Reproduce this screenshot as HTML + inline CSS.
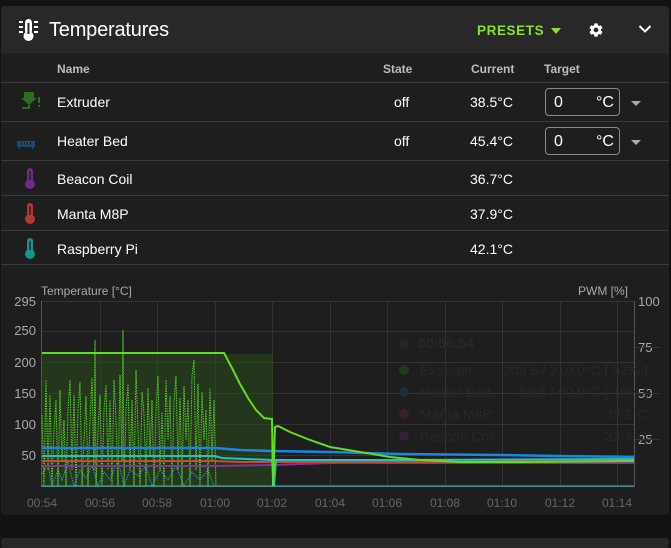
<!DOCTYPE html>
<html><head><meta charset="utf-8"><style>
*{box-sizing:border-box;margin:0;padding:0}
body{width:671px;height:543px;background:#121212;font-family:"Liberation Sans",sans-serif;color:#fff;overflow:hidden;position:relative}
.card{position:absolute;left:1px;top:6px;width:668px;height:509px;background:#1e1e1e;border-radius:3px;overflow:hidden}
.hdr{height:47px;background:#282828;position:relative}
.hdr .t{position:absolute;left:48px;top:13px;font-size:20px;letter-spacing:-0.2px}
.presets{position:absolute;left:476px;top:17px;color:#8be12c;font-weight:bold;font-size:13.5px;letter-spacing:0.6px}
.row{position:absolute;left:0;width:668px;border-top:1px solid #3a3a3a;font-size:14px}
.th{font-size:12px;font-weight:bold;color:#bdbdbd;position:absolute}
.c{position:absolute}
.inp{position:absolute;left:544px;width:75px;height:28px;border:1px solid #8a8a8a;border-radius:4px;font-size:16px}
.inp span{position:absolute;top:5px}
.tri{position:absolute;left:630px;width:0;height:0;border-left:5px solid transparent;border-right:5px solid transparent;border-top:5px solid #aaa}
.bot{position:absolute;left:1px;top:538px;width:668px;height:10px;background:#282828;border-radius:3px}
</style></head><body>
<div class="card">
 <div class="hdr">
  <svg style="position:absolute;left:17px;top:12px" width="22" height="24" viewBox="0 0 22 24">
   <rect x="7" y="1" width="7" height="15" rx="3.5" fill="#fff"/><circle cx="10.5" cy="18" r="5" fill="#fff"/>
   <rect x="9.5" y="5" width="2" height="11" fill="#282828"/>
   <g fill="#fff"><rect x="1" y="3" width="4" height="2"/><rect x="1" y="8" width="4" height="2"/><rect x="1" y="13" width="4" height="2"/><rect x="16" y="3" width="4" height="2"/><rect x="16" y="8" width="4" height="2"/><rect x="16" y="13" width="4" height="2"/></g>
  </svg>
  <div class="t">Temperatures</div>
  <div class="presets">PRESETS</div>
  <div style="position:absolute;left:550px;top:22px;border-left:5px solid transparent;border-right:5px solid transparent;border-top:6px solid #8be12c"></div>
  <svg style="position:absolute;left:587px;top:16px" width="16" height="16" viewBox="0 0 24 24"><path fill="#fff" d="M12 15.5A3.5 3.5 0 1 1 12 8.5a3.5 3.5 0 0 1 0 7zm7.43-2.530c.04-.32.07-.64.07-.97s-.03-.66-.07-1l2.110-1.630c.19-.15.24-.42.12-.64l-2-3.460c-.12-.22-.39-.31-.61-.22l-2.490 1c-.52-.39-1.060-.73-1.690-.98l-.37-2.650A.506.506 0 0 0 14 2h-4c-.25 0-.46.18-.5.42l-.37 2.650c-.63.25-1.170.59-1.690.98l-2.490-1c-.22-.09-.49 0-.61.22l-2 3.460c-.13.22-.07.49.12.64L4.570 11c-.04.34-.07.67-.07 1s.03.65.07.97l-2.110 1.660c-.19.15-.25.42-.12.64l2 3.460c.12.22.39.3.61.22l2.490-1.010c.52.4 1.060.74 1.690.99l.37 2.650c.04.24.25.42.5.42h4c.25 0 .46-.18.5-.42l.37-2.650c.63-.26 1.170-.59 1.690-.99l2.490 1.010c.22.08.49 0 .61-.22l2-3.460c.12-.22.07-.49-.12-.64l-2.110-1.660z"/></svg>
  <svg style="position:absolute;left:637px;top:18px" width="14" height="10" viewBox="0 0 14 10"><path d="M1.5 2l5.5 5.5L12.5 2" stroke="#fff" stroke-width="2" fill="none"/></svg>
 </div>
 <div class="th" style="left:56px;top:56px">Name</div>
 <div class="th" style="left:382px;top:56px">State</div>
 <div class="th" style="left:470px;top:56px">Current</div>
 <div class="th" style="left:543px;top:56px">Target</div>

 <div class="row" style="top:76px;height:39px">
  <svg class="c" style="left:18px;top:8px" width="22" height="22" viewBox="0 0 22 22"><path fill="#2c6e1e" d="M5 1h10v6h3l-8 7-8-7h3z"/><path d="M10 14v3H3" stroke="#2c6e1e" stroke-width="2" fill="none"/><rect x="19" y="6" width="2" height="6" fill="#2c6e1e"/><rect x="19" y="14" width="2" height="2" fill="#2c6e1e"/></svg>
  <div class="c" style="left:56px;top:11px">Extruder</div>
  <div class="c" style="left:393px;top:11px">off</div>
  <div class="c" style="left:469px;top:11px">38.5°C</div>
  <div class="inp" style="top:5px"><span style="left:8px">0</span><span style="left:50px">°C</span></div>
  <div class="tri" style="top:18px"></div>
 </div>
 <div class="row" style="top:115px;height:39px">
  <svg class="c" style="left:16px;top:17px" width="18" height="10" viewBox="0 0 18 10"><path fill="#1d4a72" d="M0 2h18v6h-2v2h-1V8H3v2H2V8H0z"/><g fill="#1e1e1e"><rect x="4" y="3" width="1" height="3"/><rect x="7" y="3" width="1" height="3"/><rect x="10" y="3" width="1" height="3"/><rect x="13" y="3" width="1" height="3"/></g></svg>
  <div class="c" style="left:56px;top:11px">Heater Bed</div>
  <div class="c" style="left:393px;top:11px">off</div>
  <div class="c" style="left:469px;top:11px">45.4°C</div>
  <div class="inp" style="top:5px"><span style="left:8px">0</span><span style="left:50px">°C</span></div>
  <div class="tri" style="top:18px"></div>
 </div>
 <div class="row" style="top:154px;height:35px">
  <svg class="c" style="left:23px;top:7px" width="12" height="22" viewBox="0 0 12 22"><rect x="3" y="0" width="6" height="14" rx="3" fill="#6b2d85"/><circle cx="6" cy="16" r="5" fill="#6b2d85"/><rect x="5.3" y="3" width="1.4" height="9" fill="#1e1e1e"/></svg>
  <div class="c" style="left:56px;top:10px">Beacon Coil</div>
  <div class="c" style="left:469px;top:10px">36.7°C</div>
 </div>
 <div class="row" style="top:189px;height:35px">
  <svg class="c" style="left:23px;top:7px" width="12" height="22" viewBox="0 0 12 22"><rect x="3" y="0" width="6" height="14" rx="3" fill="#b3382f"/><circle cx="6" cy="16" r="5" fill="#b3382f"/><rect x="5.3" y="3" width="1.4" height="9" fill="#1e1e1e"/></svg>
  <div class="c" style="left:56px;top:10px">Manta M8P</div>
  <div class="c" style="left:469px;top:10px">37.9°C</div>
 </div>
 <div class="row" style="top:224px;height:35px;border-bottom:1px solid #3a3a3a">
  <svg class="c" style="left:23px;top:7px" width="12" height="22" viewBox="0 0 12 22"><rect x="3" y="0" width="6" height="14" rx="3" fill="#14948a"/><circle cx="6" cy="16" r="5" fill="#14948a"/><rect x="5.3" y="3" width="1.4" height="9" fill="#1e1e1e"/></svg>
  <div class="c" style="left:56px;top:10px">Raspberry Pi</div>
  <div class="c" style="left:469px;top:10px">42.1°C</div>
 </div>
</div>
<svg style="position:absolute;left:0;top:0" width="671" height="543" font-family="Liberation Sans, sans-serif">
 <g fill="#aaa" font-size="12"><text x="41" y="295">Temperature [°C]</text><text x="578" y="295">PWM [%]</text></g>
 <g fill="#aaa" font-size="13" text-anchor="end">
  <text x="36" y="306">295</text><text x="36" y="335">250</text><text x="36" y="367">200</text><text x="36" y="398">150</text><text x="36" y="429">100</text><text x="36" y="460">50</text>
 </g>
 <g fill="#aaa" font-size="13"><text x="638" y="306">100</text><text x="638" y="352">75</text><text x="638" y="398">50</text><text x="638" y="444">25</text></g>
 <g stroke="#333" stroke-width="1">
  <line x1="41" y1="301.5" x2="634" y2="301.5"/><line x1="41" y1="331.5" x2="634" y2="331.5"/><line x1="41" y1="362.5" x2="634" y2="362.5"/><line x1="41" y1="393.5" x2="634" y2="393.5"/><line x1="41" y1="424.5" x2="634" y2="424.5"/><line x1="41" y1="455.5" x2="634" y2="455.5"/>
  <line x1="634" y1="347.5" x2="660" y2="347.5"/><line x1="634" y1="393.5" x2="660" y2="393.5"/><line x1="634" y1="439.5" x2="660" y2="439.5"/>
  <line x1="100.5" y1="301" x2="100.5" y2="486"/><line x1="157.5" y1="301" x2="157.5" y2="486"/><line x1="215.5" y1="301" x2="215.5" y2="486"/><line x1="272.5" y1="301" x2="272.5" y2="486"/><line x1="330.5" y1="301" x2="330.5" y2="486"/><line x1="387.5" y1="301" x2="387.5" y2="486"/><line x1="445.5" y1="301" x2="445.5" y2="486"/><line x1="502.5" y1="301" x2="502.5" y2="486"/><line x1="560.5" y1="301" x2="560.5" y2="486"/><line x1="617.5" y1="301" x2="617.5" y2="486"/>
 </g>
 <g stroke="#555"><line x1="41.5" y1="301" x2="41.5" y2="487"/><line x1="634.5" y1="301" x2="634.5" y2="487"/><line x1="41" y1="486.5" x2="634" y2="486.5"/></g>
 <g fill="#666" font-size="12" text-anchor="middle">
  <text x="42" y="507">00:54</text><text x="100" y="507">00:56</text><text x="157" y="507">00:58</text><text x="215" y="507">01:00</text><text x="272" y="507">01:02</text><text x="330" y="507">01:04</text><text x="387" y="507">01:06</text><text x="445" y="507">01:08</text><text x="502" y="507">01:10</text><text x="560" y="507">01:12</text><text x="617" y="507">01:14</text>
 </g>
 <g fill="#282828" font-size="14" font-weight="bold"><text x="418" y="348">00:56:54</text></g>
 <g fill="#282828" font-size="14"><text x="420" y="375">Extruder:</text><text x="420" y="397">Heater Bed:</text><text x="420" y="419">Manta M8P:</text><text x="420" y="441">Beacon Coil:</text>
  <text x="648" y="375" text-anchor="end">209.8 / 210.0°C [ 52% ]</text><text x="648" y="397" text-anchor="end">59.8 / 60.0°C [ 10% ]</text><text x="648" y="419" text-anchor="end">39.2°C</text><text x="648" y="441" text-anchor="end">32.4°C</text></g>
 <g><circle cx="404" cy="344" r="5" fill="#262626"/><circle cx="404" cy="370" r="5" fill="#1f3a1f"/><circle cx="404" cy="392" r="5" fill="#1f2e3a"/><circle cx="404" cy="414" r="5" fill="#3a2222"/><circle cx="404" cy="436" r="5" fill="#302230"/></g>
 <rect x="42" y="354" width="231" height="132" fill="#2a4a1c" opacity="0.55"/>
 <polyline fill="none" stroke="#2f8fd8" stroke-width="1" stroke-dasharray="1.5 1" points="42,474 48,465 52,486 58,470 62,480 68,462 74,486 80,470 86,478 92,466 98,486 104,472 110,480 118,460 124,486 130,470 138,476 146,466 152,486 160,470 168,480 176,466 184,486 192,472 200,480 208,470 214,486"/>
 <polyline fill="none" stroke="#5ad12a" stroke-width="1" stroke-dasharray="1.5 1" points="42,415 44,486 46,380 48,470 50,395 52,486 54,430 56,400 58,486 60,390 62,460 64,420 66,486 68,410 70,380 72,470 74,395 76,486 78,410 80,382 82,486 84,440 86,396 88,486 90,420 92,378 94,470 95,340 96,486 98,430 100,395 102,486 104,410 106,385 108,470 110,400 112,486 114,380 116,420 118,486 120,375 122,460 123,330 124,486 126,410 128,384 130,470 132,400 134,486 136,370 138,430 140,486 142,392 144,414 146,486 148,388 150,456 152,400 154,486 156,410 158,376 160,470 162,412 164,486 166,380 168,440 170,396 172,486 174,402 176,376 178,470 180,398 182,486 184,386 186,440 188,400 190,486 192,376 194,360 196,470 198,384 200,486 202,392 204,440 206,410 208,486 210,388 212,460 214,400 216,486 218,486"/>
 <line x1="41" y1="486" x2="634" y2="486" stroke="#22c7c7" stroke-width="1"/>
 <polyline fill="none" stroke="#8b2f9a" stroke-width="2" points="42,466 215,466 272,465 330,463 634,463"/>
 <polyline fill="none" stroke="#d0463a" stroke-width="2" points="42,461 215,461 240,462 272,462 400,462 634,461"/>
 <polyline fill="none" stroke="#1dc5c5" stroke-width="2" points="42,456 215,456 222,458 272,460 274,486 276,460 300,460 400,460 634,459"/>
 <polyline fill="none" stroke="#1a86e0" stroke-width="2.5" points="42,448 170,448 215,448 240,450 272,451 330,452 400,454 500,455 560,456 634,457"/>
 <polyline fill="none" stroke="#5fe01a" stroke-width="2" points="42,353 224,353 232,368 240,384 248,398 256,410 264,418 272,419 273,486 275,427 278,426 290,432 310,440 330,447 360,452 390,457 420,460 460,462 520,462 634,461"/>
</svg>
<div class="bot"></div>
</body></html>
